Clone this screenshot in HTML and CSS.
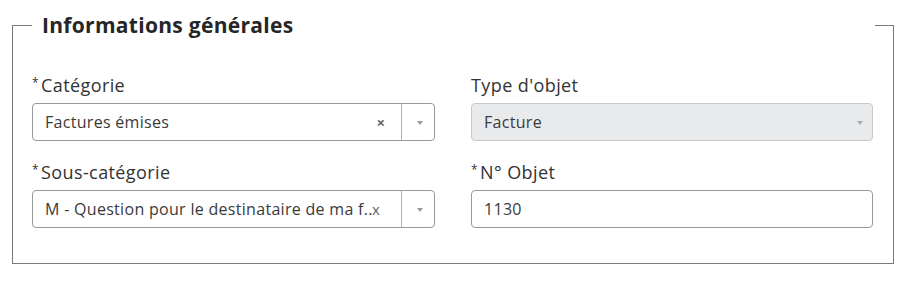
FILE: index.html
```html
<!DOCTYPE html>
<html lang="fr">
<head>
  <meta charset="UTF-8" />
  <title>Informations générales</title>
  <link rel="stylesheet" href="styles.css">
</head>
<body>

  <fieldset class="section">
    <legend>Informations générales</legend>

    <div class="grid">
      <!-- Catégorie -->
      <div class="field">
        <label><span class="req">*</span>Catégorie</label>
        <div class="select">
          <span class="value">Factures émises</span>
          <span class="clear">&times;</span>
          <span class="arrow"></span>
        </div>
      </div>

      <!-- Type d'objet -->
      <div class="field">
        <label>Type d'objet</label>
        <div class="select disabled">
          <span class="value">Facture</span>
          <span class="arrow"></span>
        </div>
      </div>

      <!-- Sous-catégorie -->
      <div class="field">
        <label><span class="req">*</span>Sous-catégorie</label>
        <div class="select">
          <span class="value">M - Question pour le destinataire de ma f..</span>
          <span class="clear tight">x</span>
          <span class="arrow"></span>
        </div>
      </div>

      <!-- N° Objet -->
      <div class="field">
        <label><span class="req">*</span>N° Objet</label>
        <input class="text-input" type="text" value="1130">
      </div>
    </div>
  </fieldset>

</body>
</html>
```

FILE: styles.css
```css
body {
  margin: 0;
  padding: 0;
  background-color: #fff;
  font-family: "Open Sans", "Liberation Sans", sans-serif;
  color: #3a3a3a;
}
/* Section frame */
.section {
  margin: 11px 0 0 12px;
  width: 880px;
  box-sizing: border-box;
  border: 1.5px solid #7a7a7a;
  padding: 35px 18px 35px 19px;
}
.section legend {
  width: 843px;
  box-sizing: border-box;
  padding: 0 10px;
  font-size: 21px;
  font-weight: 700;
  letter-spacing: 0.3px;
  line-height: 28px;
  color: #262626;
}
/* Fields */
.grid {
  display: grid;
  grid-template-columns: 403px 402px;
  column-gap: 36px;
  row-gap: 20px;
}
.field label {
  display: block;
  font-size: 18px;
  letter-spacing: 0.4px;
  line-height: 22px;
  color: #333;
  margin-bottom: 7px;
}
.req {
  font-size: 12px;
  line-height: 0;
  vertical-align: 5px;
  margin-right: 2px;
}
.select {
  display: flex;
  align-items: center;
  height: 38px;
  box-sizing: border-box;
  border: 1px solid #9a9a9a;
  border-radius: 4px;
  font-size: 16px;
  letter-spacing: 0.3px;
  color: #3a3a3a;
}
.select .value {
  flex: 1;
  padding-left: 12px;
  white-space: nowrap;
  overflow: hidden;
}
.select .clear {
  width: 24px;
  color: #666;
  font-size: 15px;
  font-weight: 700;
  text-align: center;
  margin-right: 8px;
}
.select .clear.tight {
  font-weight: 400;
  width: 12px;
  margin-right: 17px;
  text-align: left;
}
.select .arrow {
  width: 32px;
  height: 100%;
  border-left: 1px solid #b5b5b5;
  position: relative;
}
.select .arrow::after {
  content: "";
  position: absolute;
  left: 15px;
  top: 17px;
  border-left: 3px solid transparent;
  border-right: 3px solid transparent;
  border-top: 4px solid #999;
}
.select.disabled {
  background-color: #e9eaec;
  border-color: #c9c9c9;
}
.select.disabled .arrow {
  border-left: none;
}
.select.disabled .arrow::after {
  left: 17px;
  border-top-color: #aaa;
}
.text-input {
  display: block;
  width: 100%;
  height: 38px;
  box-sizing: border-box;
  border: 1px solid #9a9a9a;
  border-radius: 4px;
  padding: 0 12px;
  font-family: inherit;
  font-size: 16px;
  letter-spacing: 0.3px;
  color: #3a3a3a;
}
```
